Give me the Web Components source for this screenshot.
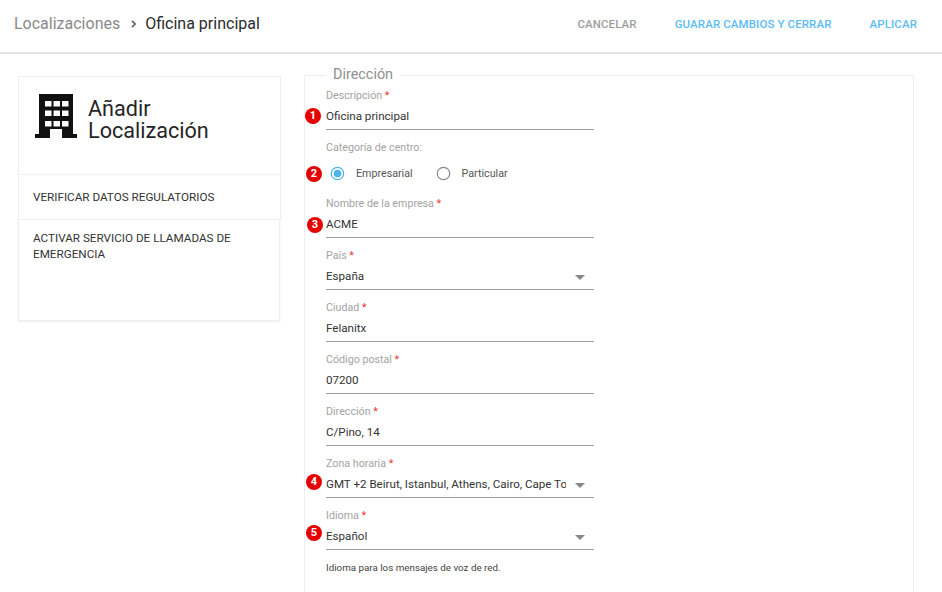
<!DOCTYPE html>
<html lang="es">
<head>
<meta charset="utf-8">
<title>Localizaciones</title>
<style>
html, body { margin: 0; height: 100%; overflow: hidden; background: #fff; }
body { font-family: Roboto, "Liberation Sans", sans-serif; color: #333; }
</style>
</head>
<body>
<app-page>
    <top-bar slot="top" parent="Localizaciones" current="Oficina principal">
        <bar-action color="#9e9e9e">CANCELAR</bar-action>
        <bar-action color="#5bbcf7">GUARAR CAMBIOS Y CERRAR</bar-action>
        <bar-action color="#5bbcf7">APLICAR</bar-action>
    </top-bar>
    <side-menu slot="side">
        <menu-title>Añadir<br>Localización</menu-title>
        <menu-item>VERIFICAR DATOS REGULATORIOS</menu-item>
        <menu-item tall>ACTIVAR SERVICIO DE LLAMADAS DE EMERGENCIA</menu-item>
    </side-menu>
    <form-box slot="main" legend="Dirección">
        <text-field label="Descripción" value="Oficina principal" badge="1" badge-top="20" badge-left="-21"></text-field>
        <radio-group label="Categoría de centro:" badge="2">
            <radio-option checked>Empresarial</radio-option>
            <radio-option>Particular</radio-option>
        </radio-group>
        <text-field label="Nombre de la empresa" value="ACME" badge="3" badge-top="21" badge-left="-19"></text-field>
        <text-field label="País" value="España" select></text-field>
        <text-field label="Ciudad" value="Felanitx"></text-field>
        <text-field label="Código postal" value="07200"></text-field>
        <text-field label="Dirección" value="C/Pino, 14"></text-field>
        <text-field label="Zona horaria" value="GMT +2 Beirut, Istanbul, Athens, Cairo, Cape Town" select badge="4" badge-top="18" badge-left="-20"></text-field>
        <text-field label="Idioma" value="Español" select badge="5" badge-top="17" badge-left="-20" hint="Idioma para los mensajes de voz de red."></text-field>
    </form-box>
</app-page>

<script>
class AppPage extends HTMLElement {
    constructor() {
        super()
        this.attachShadow({ mode: "open" }).innerHTML = `<style>
        :host { display: block; }
        .content { display: flex; align-items: flex-start; padding: 13px 0 0 18px; }
        .side { flex: none; width: 263px; margin: 9px 23px 0 0; }
        .main { flex: none; width: 610px; }
        </style>
        <slot name="top"></slot>
        <div class="content">
            <div class="side"><slot name="side"></slot></div>
            <div class="main"><slot name="main"></slot></div>
        </div>`
    }
}
customElements.define('app-page', AppPage)

class TopBar extends HTMLElement {
    constructor() {
        super()
        this.attachShadow({ mode: "open" }).innerHTML = `<style>
        :host { display: flex; align-items: center; justify-content: space-between; box-sizing: border-box;
            height: 54px; padding: 0 25px 5px 14px; border-bottom: 2px solid #e3e3e3; }
        .crumbs { display: flex; align-items: center; font-size: 16px; color: #8a8a8a; }
        .sep { width: 6px; height: 8px; margin: 1px 8px 0 11px; }
        .current { color: #2b2b2b; }
        .actions { display: flex; gap: 38px; }
        </style>
        <div class="crumbs">
            <span>${this.getAttribute('parent')}</span>
            <svg class="sep" viewBox="0 0 6 8"><path d="M1 .8 4.2 4 1 7.2" fill="none" stroke="#666" stroke-width="1.7"/></svg>
            <span class="current">${this.getAttribute('current')}</span>
        </div>
        <div class="actions"><slot></slot></div>`
    }
}
customElements.define('top-bar', TopBar)

class BarAction extends HTMLElement {
    constructor() {
        super()
        this.attachShadow({ mode: "open" }).innerHTML = `<style>
        :host { display: block; font-size: 11.5px; font-weight: 500; letter-spacing: .1px; color: ${this.getAttribute('color')}; }
        </style><slot></slot>`
    }
}
customElements.define('bar-action', BarAction)

class SideMenu extends HTMLElement {
    constructor() {
        super()
        this.attachShadow({ mode: "open" }).innerHTML = `<style>
        :host { display: block; }
        </style><slot></slot>`
    }
}
customElements.define('side-menu', SideMenu)

class MenuTitle extends HTMLElement {
    constructor() {
        super()
        this.attachShadow({ mode: "open" }).innerHTML = `<style>
        :host { display: flex; align-items: flex-start; gap: 11px; box-sizing: border-box; height: 99px;
            padding: 17px 0 0 16px; border: 1px solid #efefef; font-size: 21.6px; line-height: 22px; color: #262626; }
        svg { flex: none; width: 42px; height: 44px; }
        .text { padding-top: 4px; }
        </style>
        <svg viewBox="0 0 42 44">
            <path fill-rule="evenodd" fill="#111" d="M4 0h34v40h4v4H27v-9H15v9H0v-4h4zM10 7v5.5h6.5V7zm8.5 0v5.5H25V7zM27 7v5.5h6.5V7zM10 16.5V22h6.5v-5.5zm8.5 0V22H25v-5.5zm8.5 0V22h6.5v-5.5zM10 27v5.5h6.5V27zm8.5 0v5.5H25V27zm8.5 0v5.5h6.5V27z"/>
        </svg>
        <div class="text"><slot></slot></div>`
    }
}
customElements.define('menu-title', MenuTitle)

class MenuItem extends HTMLElement {
    constructor() {
        super()
        const tall = this.hasAttribute('tall')
        this.attachShadow({ mode: "open" }).innerHTML = `<style>
        :host { display: block; box-sizing: border-box; margin-top: -1px; border: 1px solid #efefef;
            font-size: 11.7px; line-height: 16px; color: #333;
            height: ${tall ? 102 : 46}px; padding: ${tall ? '10px 14px' : '14px 14px'};
            ${tall ? 'width: 262px; border-top-color: transparent; box-shadow: 0 1px 2px #eee;' : ''} }
        </style><slot></slot>`
    }
}
customElements.define('menu-item', MenuItem)

class FormBox extends HTMLElement {
    constructor() {
        super()
        this.attachShadow({ mode: "open" }).innerHTML = `<style>
        :host { display: block; }
        fieldset { margin: 0; padding: 5px 0 40px 21px; border: 1px solid #efefef; min-width: 0; }
        legend { margin-left: 0; padding: 0 7px; font-size: 14.4px; line-height: 16px; color: #8f8f8f; }
        </style>
        <fieldset>
            <legend>${this.getAttribute('legend')}</legend>
            <slot></slot>
        </fieldset>`
    }
}
customElements.define('form-box', FormBox)

const badgeCss = `
    .badge { position: absolute; width: 16px; height: 16px; border-radius: 50%; background: #e60000;
        color: #fff; font-size: 11px; font-weight: 700; line-height: 16px; text-align: center; }`

class TextField extends HTMLElement {
    constructor() {
        super()
        const badge = this.getAttribute('badge')
        const select = this.hasAttribute('select')
        const hint = this.getAttribute('hint')
        this.attachShadow({ mode: "open" }).innerHTML = `<style>
        :host { display: block; position: relative; width: 268px; margin-bottom: 10px; }
        ${badgeCss}
        .badge { top: ${this.getAttribute('badge-top')}px; left: ${this.getAttribute('badge-left')}px; }
        label { display: block; height: 16px; font-size: 10.7px; line-height: 16px; color: #a3a3a3; }
        label b { font-weight: 400; color: #e33; }
        .box { display: flex; align-items: center; box-sizing: border-box; height: 26px; padding-bottom: 2px;
            border-bottom: 1px solid #9e9e9e; font-size: 11.6px; color: #333; }
        .value { flex: 1; min-width: 0; overflow: hidden; white-space: nowrap; }
        .arrow { flex: none; width: 0; height: 0; margin: 3px 9px 0 9px; border: 5px solid transparent;
            border-top-color: #888; border-bottom: 0; }
        .hint { margin-top: 11px; font-size: 9.8px; line-height: 14px; color: #444; }
        </style>
        ${badge ? `<div class="badge">${badge}</div>` : ''}
        <label>${this.getAttribute('label')} <b>*</b></label>
        <div class="box">
            <div class="value">${this.getAttribute('value')}</div>
            ${select ? '<div class="arrow"></div>' : ''}
        </div>
        ${hint ? `<div class="hint">${hint}</div>` : ''}`
    }
}
customElements.define('text-field', TextField)

class RadioGroup extends HTMLElement {
    constructor() {
        super()
        this.attachShadow({ mode: "open" }).innerHTML = `<style>
        :host { display: block; position: relative; width: 268px; margin-bottom: 15px; }
        ${badgeCss}
        .badge { top: 26px; left: -20px; }
        label { display: block; height: 16px; font-size: 10.7px; line-height: 16px; color: #a3a3a3; }
        .options { display: flex; gap: 23px; height: 16px; margin-top: 9px; padding-left: 4px; }
        </style>
        <div class="badge">${this.getAttribute('badge')}</div>
        <label>${this.getAttribute('label')}</label>
        <div class="options"><slot></slot></div>`
    }
}
customElements.define('radio-group', RadioGroup)

class RadioOption extends HTMLElement {
    constructor() {
        super()
        const on = this.hasAttribute('checked')
        this.attachShadow({ mode: "open" }).innerHTML = `<style>
        :host { display: flex; align-items: center; gap: 11px; font-size: 10.7px; color: #555; }
        svg { width: 15px; height: 15px; }
        </style>
        <svg viewBox="0 0 15 15">
            <circle cx="7.5" cy="7.5" r="6.2" fill="none" stroke="${on ? '#4db4f2' : '#888'}" stroke-width="1.2"/>
            ${on ? '<circle cx="7.5" cy="7.5" r="3.8" fill="#4db4f2"/>' : ''}
        </svg>
        <slot></slot>`
    }
}
customElements.define('radio-option', RadioOption)
</script>
</body>
</html>
